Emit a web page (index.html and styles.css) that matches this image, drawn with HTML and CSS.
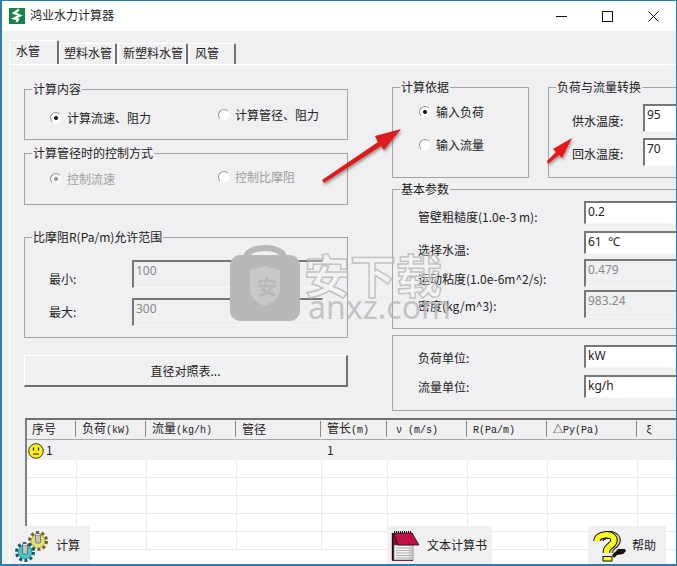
FILE: index.html
```html
<!DOCTYPE html>
<html lang="zh-CN">
<head>
    <meta charset="UTF-8">
    <meta name="viewport" content="width=device-width, initial-scale=1.0">
    <title>鸿业水力计算器</title>
    <link rel="stylesheet" href="styles.css">
</head>
<body>
    <div class="window">
        <div class="titlebar">
            <svg class="logo" viewBox="0 0 16 16">
                <rect width="16" height="16" fill="#15824a"/>
                <path d="M10 1.500 5 5l6 2.500-6 3 4 1-1.500 2.500" fill="none" stroke="#fff" stroke-width="2.200"/>
            </svg>
            <span class="app-name">鸿业水力计算器</span>
            <div class="win-buttons">
                <svg viewBox="0 0 11 11"><path d="M0 5.500h11" stroke="#111" fill="none"/></svg>
                <svg viewBox="0 0 11 11"><rect x=".5" y=".5" width="10" height="10" stroke="#111" fill="none"/></svg>
                <svg viewBox="0 0 11 11"><path d="M.5.500l10 10M10.500.500l-10 10" stroke="#111" fill="none"/></svg>
            </div>
        </div>

        <div class="tabs">
            <div class="tab active">水管</div>
            <div class="tab">塑料水管</div>
            <div class="tab">新塑料水管</div>
            <div class="tab tab-last">风管</div>
        </div>

        <div class="panel">
            <div class="columns">
                <div class="col-left">
                    <div class="group calc-group">
                        <span class="group-title">计算内容</span>
                        <div class="radio-row">
                            <label class="radio-item"><span class="radio checked"></span>计算流速、阻力</label>
                            <label class="radio-item raised-3"><span class="radio"></span>计算管径、阻力</label>
                        </div>
                    </div>
                    <div class="group mode-group">
                        <span class="group-title">计算管径时的控制方式</span>
                        <div class="radio-row disabled">
                            <label class="radio-item"><span class="radio checked"></span>控制流速</label>
                            <label class="radio-item raised-2"><span class="radio"></span>控制比摩阻</label>
                        </div>
                    </div>
                    <div class="group range-group">
                        <span class="group-title">比摩阻R(Pa/m)允许范围</span>
                        <div class="row row-range">
                            <label class="range-label drop-11">最小:</label>
                            <div class="field off tall range-field">100</div>
                        </div>
                        <div class="row">
                            <label class="range-label drop-6">最大:</label>
                            <div class="field off tall range-field">300</div>
                        </div>
                    </div>
                    <div class="table-btn">直径对照表...</div>
                </div>

                <div class="col-right">
                    <div class="top-groups">
                        <div class="group basis-group">
                            <span class="group-title">计算依据</span>
                            <label class="radio-item basis-item"><span class="radio checked"></span>输入负荷</label>
                            <label class="radio-item"><span class="radio"></span>输入流量</label>
                        </div>
                        <div class="group temp-group">
                            <span class="group-title">负荷与流量转换</span>
                            <div class="row row-temp">
                                <label class="temp-label drop-9">供水温度:</label>
                                <div class="field tall">95</div>
                            </div>
                            <div class="row">
                                <label class="temp-label drop-8">回水温度:</label>
                                <div class="field tall">70</div>
                            </div>
                        </div>
                    </div>
                    <div class="group params-group">
                        <span class="group-title">基本参数</span>
                        <div class="row params-a">
                            <label class="param-label drop-8">管壁粗糙度(1.0e-3 m):</label>
                            <div class="field">0.2</div>
                        </div>
                        <div class="row params-b">
                            <label class="param-label drop-11">选择水温:</label>
                            <div class="field">61 &nbsp;℃</div>
                        </div>
                        <div class="row params-c">
                            <label class="param-label drop-12">运动粘度(1.0e-6m^2/s):</label>
                            <div class="field off tall">0.479</div>
                        </div>
                        <div class="row">
                            <label class="param-label drop-8">密度(kg/m^3):</label>
                            <div class="field off tall">983.24</div>
                        </div>
                    </div>
                    <div class="group units-group">
                        <div class="row params-a">
                            <label class="param-label drop-5">负荷单位:</label>
                            <div class="field">kW</div>
                        </div>
                        <div class="row">
                            <label class="param-label drop-4">流量单位:</label>
                            <div class="field">kg/h</div>
                        </div>
                    </div>
                </div>
            </div>

            <div class="grid-wrap">
                <table class="grid">
                    <colgroup>
                        <col class="c1"><col class="c2"><col class="c3"><col class="c4"><col class="c5">
                        <col class="c6"><col class="c7"><col class="c8"><col class="c9">
                    </colgroup>
                    <thead>
                        <tr>
                            <th>序号</th>
                            <th>负荷<span class="mono">(kW)</span></th>
                            <th>流量<span class="mono">(kg/h)</span></th>
                            <th>管径</th>
                            <th>管长<span class="mono">(m)</span></th>
                            <th class="pad-wide"><span class="mono">ν (m/s)</span></th>
                            <th><span class="mono">R(Pa/m)</span></th>
                            <th><span class="mono">△Py(Pa)</span></th>
                            <th class="pad-wide"><span class="mono">ξ</span></th>
                        </tr>
                    </thead>
                    <tbody>
                        <tr class="current">
                            <td class="first-cell">
                                <svg class="smiley" viewBox="0 0 16 16">
                                    <circle cx="8" cy="8" r="7.300" fill="#f8ee20" stroke="#222" stroke-width=".9"/>
                                    <path d="M5.500 4.500v3M10.500 4.500v3M5 11h6" stroke="#222" stroke-width="1.200" fill="none"/>
                                </svg>1
                            </td>
                            <td></td><td></td><td></td><td>1</td><td></td><td></td><td></td><td></td>
                        </tr>
                        <tr><td></td><td></td><td></td><td></td><td></td><td></td><td></td><td></td><td></td></tr>
                        <tr><td></td><td></td><td></td><td></td><td></td><td></td><td></td><td></td><td></td></tr>
                        <tr><td></td><td></td><td></td><td></td><td></td><td></td><td></td><td></td><td></td></tr>
                        <tr><td></td><td></td><td></td><td></td><td></td><td></td><td></td><td></td><td></td></tr>
                        <tr><td></td><td></td><td></td><td></td><td></td><td></td><td></td><td></td><td></td></tr>
                    </tbody>
                </table>
            </div>
        </div>

        <!-- toolbar sits on top of the grid -->
        <div class="actions">
            <div class="action action-calc">
                <svg class="action-icon gears" viewBox="0 0 36 34">
                    <g>
                        <circle cx="24" cy="13" r="8.500" fill="none" stroke="#6b6420" stroke-width="3" stroke-dasharray="3 2.400"/>
                        <circle cx="24" cy="13" r="7" fill="#e6e070" stroke="#77702a" stroke-width=".5"/>
                        <rect x="21.500" y="6" width="5" height="9" rx="1" fill="#c4c4c4" stroke="#333" stroke-width=".5"/>
                        <ellipse cx="24" cy="6.500" rx="2.500" ry="1.100" fill="#eee" stroke="#333" stroke-width=".4"/>
                    </g>
                    <g>
                        <circle cx="11" cy="24" r="8.500" fill="none" stroke="#0d5a66" stroke-width="3" stroke-dasharray="3 2.400"/>
                        <circle cx="11" cy="24" r="7" fill="#48c4cc" stroke="#0d5a66" stroke-width=".5"/>
                        <rect x="8.500" y="16" width="5" height="10" rx="1" fill="#bcc4c4" stroke="#333" stroke-width=".5"/>
                        <ellipse cx="11" cy="16.500" rx="2.500" ry="1.100" fill="#eee" stroke="#333" stroke-width=".4"/>
                    </g>
                </svg>
                <span>计算</span>
            </div>
            <div class="action action-report">
                <svg class="action-icon notebook" viewBox="0 0 30 32">
                    <rect x="1" y="3" width="21" height="28" fill="#8a1030"/>
                    <rect x="3" y="15" width="19" height="15" fill="#f4f4f4" stroke="#555" stroke-width=".6"/>
                    <path d="M5 18h16M5 20.500h16M5 23h16M5 25.500h16M5 28h16" stroke="#999" stroke-width=".8"/>
                    <path d="M18 15h4v15h-4z" fill="#bbb" opacity=".6"/>
                    <path d="M3 3h18l7 12H7z" fill="#c01048" stroke="#111" stroke-width=".8"/>
                    <path d="M3 2h18" stroke="#111" stroke-width="2" stroke-dasharray="1 1"/>
                    <path d="M1.500 3v27" stroke="#111" stroke-width="1.400"/>
                </svg>
                <span>文本计算书</span>
            </div>
            <div class="action action-help">
                <svg class="action-icon help" viewBox="0 0 34 32">
                    <path d="M8 11C8 4 24 2 25 10c.5 5-7 6-7.500 11v2" fill="none" stroke="#111" stroke-width="7.500"/>
                    <path d="M8 11C8 4 24 2 25 10c.5 5-7 6-7.500 11v2" fill="none" stroke="#e8e070" stroke-width="5.500"/>
                    <path d="M5 11C5 4 21 2 22 10c.5 5-7 6-7.500 11v2" fill="none" stroke="#111" stroke-width="7.500"/>
                    <path d="M5 11C5 4 21 2 22 10c.5 5-7 6-7.500 11v2" fill="none" stroke="#fafa20" stroke-width="5.500"/>
                    <rect x="11" y="26.500" width="9" height="4.500" fill="#fafa20" stroke="#111"/>
                    <path d="M20 25l6-6h7l1 2-3 3-6 1-3 3z" fill="#111"/>
                </svg>
                <span>帮助</span>
            </div>
        </div>

        <!-- site watermark -->
        <div class="watermark">
            <svg class="wm-bag" viewBox="0 0 70 80">
                <path d="M16 16C18 4 52 4 54 16" fill="none" stroke="#b8b8b8" stroke-width="6"/>
                <rect y="14" width="70" height="66" rx="10" fill="#b8b8b8"/>
                <path d="M20 29l15-4 15 4v20c0 8-9 13-15 16-6-3-15-8-15-16z" fill="#c8c8c8"/>
            </svg>
            <span class="wm-bag-char">安</span>
            <span class="wm-name">安下载</span>
            <span class="wm-url">anxz.com</span>
        </div>

        <!-- annotation arrows drawn on the screenshot -->
        <svg class="arrows" viewBox="0 0 677 566">
            <defs>
                <filter id="arrowShadow" x="-20%" y="-20%" width="140%" height="140%">
                    <feDropShadow dx="1" dy="2" stdDeviation="1.500" flood-color="#555" flood-opacity=".6"/>
                </filter>
            </defs>
            <path d="M322 180 378 142 375 136 401 129 384 150 381 146 324 183z" fill="#dc1c1c" filter="url(#arrowShadow)"/>
            <path d="M547 161 556 152 553 149 572 138 562 158 559 155 548 164z" fill="#e81818" filter="url(#arrowShadow)"/>
        </svg>
    </div>
</body>
</html>
```

FILE: styles.css
```css
html, body { margin: 0; padding: 0; }
body { font-family: "Noto Sans CJK SC", "Noto Sans", sans-serif; font-size: 12px; line-height: 16px; color: #222; }

.window { position: relative; width: 677px; height: 566px; box-sizing: border-box; display: flex; flex-direction: column; overflow: hidden; background: #f0eff1; border-style: solid; border-color: #2b7fa8; border-width: 1px 1px 2px 2px; }

/* title bar */
.titlebar { flex: none; height: 30px; display: flex; align-items: center; background: #fff; padding-left: 7px; }
.logo { width: 16px; height: 16px; margin-right: 5px; }
.app-name { font-size: 12px; color: #222; margin-top: -2px; }
.win-buttons { margin-left: auto; display: flex; gap: 35px; padding-right: 17px; }
.win-buttons svg { width: 11px; height: 11px; display: block; }

/* tabs */
.tabs { flex: none; height: 33px; display: flex; align-items: flex-end; padding-left: 7px; box-sizing: border-box; }
.tab { height: 21px; box-sizing: border-box; padding: 1px 3px 0 4px; border-top: 1px solid #fff; border-left: 1px solid #fff; border-right: 2px solid #707070; border-radius: 2px 2px 0 0; margin-right: 1px; white-space: nowrap; }
.tab.active { height: 24px; width: 50px; padding: 2px 6px 0 6px; margin-right: 0; }
.tab-last { width: 47px; padding-left: 5px; }

.panel { flex: 1; margin-left: 7px; border-top: 1px solid #fff; border-left: 1px solid #fff; min-height: 0; overflow: hidden; }
.columns { height: 353px; display: flex; padding-left: 14px; }
.col-left { flex: none; width: 324px; margin-right: 44px; padding-top: 24px; box-sizing: border-box; }
.col-right { flex: none; width: 330px; padding-top: 22px; box-sizing: border-box; }

/* group boxes */
.group { position: relative; border: 1px solid #a4a4a4; box-sizing: border-box; }
.group-title { position: absolute; top: -9px; left: 7px; padding: 0 1px; background: #f0eff1; white-space: nowrap; }

.calc-group { height: 51px; padding-top: 20px; margin-bottom: 13px; }
.mode-group { height: 52px; padding-top: 17px; margin-bottom: 32px; }
.range-group { height: 101px; padding: 22px 0 0 24px; margin-bottom: 17px; }

.radio-row { display: flex; padding-left: 25px; }
.radio-row .radio-item { flex: none; width: 168px; }
.radio-row.disabled { color: #a0a0a0; }
.radio-item { display: flex; align-items: center; height: 16px; }
.raised-3 { margin-top: -3px; }
.raised-2 { margin-top: -2px; }

.radio { flex: none; width: 12px; height: 12px; margin-right: 5px; border-radius: 50%; box-sizing: border-box; background: #fff; border: 1px solid; border-color: #999 #f6f6f6 #f6f6f6 #999; }
.radio.checked { background: radial-gradient(circle, #222 1.600px, #fff 2.300px); }
.disabled .radio.checked { background: radial-gradient(circle, #999 1.600px, #f4f4f4 2.300px); }

/* rows of label + field */
.row { display: flex; align-items: flex-start; }
.row label { white-space: nowrap; }
.field { flex: none; width: 110px; height: 23px; box-sizing: border-box; padding: 1px 2px 0; background: #fff; border-style: solid; border-width: 2px 1px 1px 2px; border-color: #777 #e8e8e8 #f8f8f8 #777; font-family: "Noto Sans", "Noto Sans CJK SC", sans-serif; color: #222; }
.field.tall { height: 28px; }
.field.off { background: #f0eff1; color: #888; }

.range-label { flex: none; width: 83px; }
.range-field { width: 191px; }
.row-range { height: 38px; }

.drop-4 { padding-top: 4px; }
.drop-5 { padding-top: 5px; }
.drop-6 { padding-top: 6px; }
.drop-8 { padding-top: 8px; }
.drop-9 { padding-top: 9px; }
.drop-11 { padding-top: 11px; }
.drop-12 { padding-top: 12px; }

.table-btn { height: 32px; box-sizing: border-box; display: flex; align-items: center; justify-content: center; border-style: solid; border-width: 1px 2px 2px 1px; border-color: #fff #707070 #707070 #fff; }

/* right column */
.top-groups { display: flex; height: 91px; margin-bottom: 11px; }
.basis-group { flex: none; width: 137px; padding: 16px 0 0 26px; margin-right: 19px; }
.basis-item { margin-bottom: 17px; }
.temp-group { flex: none; width: 180px; padding: 16px 0 0 23px; }
.row-temp { height: 34px; }
.temp-label { flex: none; width: 71px; }
.temp-group .field { width: 60px; }

.params-group { height: 140px; padding: 11px 0 0 25px; margin-bottom: 6px; width: 330px; }
.units-group { height: 76px; padding: 9px 0 0 25px; width: 330px; }
.param-label { flex: none; width: 166px; }
.params-a { height: 30px; }
.params-b { height: 28px; }
.params-c { height: 31px; }

/* data grid */
.grid-wrap { margin-left: 15px; border-top: 2px solid #707070; border-left: 2px solid #808080; background: #fff; height: 150px; width: 680px; overflow: hidden; }
.grid { border-collapse: separate; border-spacing: 0; table-layout: fixed; width: 670px; }
.c1 { width: 50px; } .c2 { width: 70px; } .c3 { width: 90px; } .c4 { width: 85px; } .c5 { width: 66px; }
.c6 { width: 80px; } .c7 { width: 80px; } .c8 { width: 90px; } .c9 { width: 59px; }
.grid th { height: 20px; box-sizing: border-box; padding: 0 0 1px 5px; font-weight: normal; text-align: left; font-size: 12px; line-height: 14px; background: #f0eff1; border-bottom: 1px solid #a8a8a8; white-space: nowrap; background-image: linear-gradient(#8a8a8a, #8a8a8a); background-size: 1px 16px; background-repeat: no-repeat; background-position: right 1px top 1px; }
.grid th.pad-wide { padding-left: 8px; }
.mono { font-family: "Liberation Mono", "Noto Sans CJK SC", monospace; font-size: 10px; line-height: 12px; }
.grid td { height: 18px; box-sizing: border-box; padding: 0; border-right: 1px solid #ebebeb; border-bottom: 1px solid #ebebeb; }
.grid .current td { height: 20px; background: #f0eff1; border: 0; padding-left: 5px; }
.grid .current .first-cell { padding-left: 1px; white-space: nowrap; }
.smiley { width: 16px; height: 16px; vertical-align: -4px; margin-right: 2px; }

/* bottom buttons */
.actions { position: absolute; left: 23px; bottom: 0; height: 38px; display: flex; }
.action { height: 38px; display: flex; align-items: center; background: #f0eff1; font-size: 12px; position: relative; }
.action-icon { position: absolute; display: block; }
.action-calc { width: 65px; margin-right: 297px; padding-left: 31px; box-sizing: border-box; }
.action-report { width: 105px; margin-right: 96px; padding-left: 40px; box-sizing: border-box; }
.action-help { width: 78px; padding-left: 44px; box-sizing: border-box; }
.gears { left: -11px; top: 2px; width: 36px; height: 34px; }
.notebook { left: 4px; top: 4px; width: 30px; height: 32px; }
.help { left: 4px; top: 4px; width: 34px; height: 32px; }

/* watermark */
.watermark { position: absolute; left: 0; top: 0; width: 100%; height: 100%; pointer-events: none; }
.wm-bag { position: absolute; left: 228px; top: 240px; width: 70px; height: 80px; }
.wm-bag-char { position: absolute; left: 255px; top: 274px; font-size: 20px; line-height: 24px; font-weight: 700; color: #b8b8b8; }
.wm-name { position: absolute; left: 302px; top: 242px; font-size: 46px; line-height: 60px; font-weight: 700; color: rgba(255, 255, 255, .3); -webkit-text-stroke: 1.500px rgba(180, 180, 180, .75); white-space: nowrap; }
.wm-url { position: absolute; left: 306px; top: 289px; font-family: "Noto Sans", sans-serif; font-size: 32px; line-height: 34px; color: rgba(185, 185, 185, .8); white-space: nowrap; }

.arrows { position: absolute; left: -2px; top: -1px; width: 677px; height: 566px; pointer-events: none; }
```
